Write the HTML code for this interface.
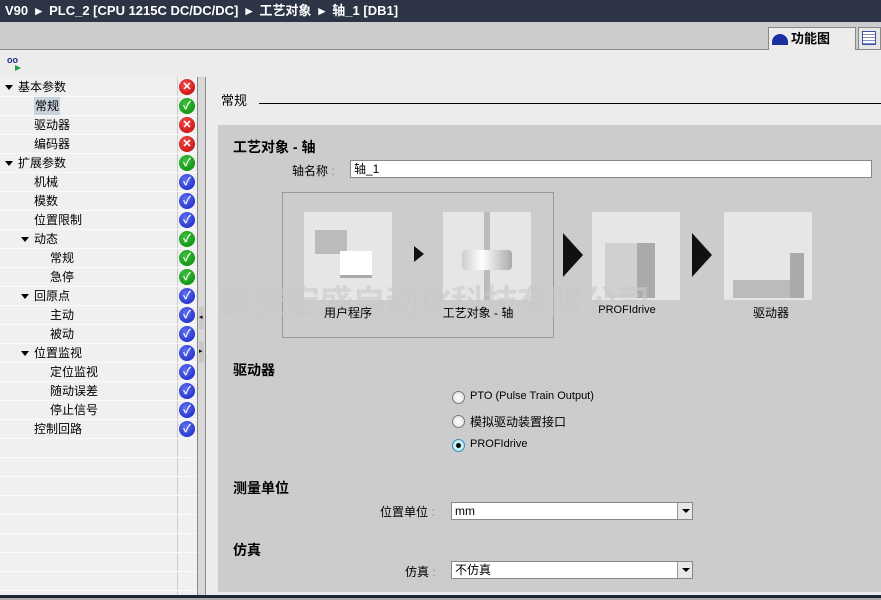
<!DOCTYPE html>
<html><head><meta charset="utf-8"><style>
*{margin:0;padding:0;box-sizing:border-box}
body{width:881px;height:600px;overflow:hidden;background:#ececec;font-family:"Liberation Sans","Noto Sans CJK SC",sans-serif;font-size:12px;color:#000;position:relative}
.a{position:absolute}
#title{left:0;top:0;width:881px;height:22px;background:#2c3446;color:#fff;font-weight:bold;font-size:13px;line-height:22px;padding-left:5px;white-space:nowrap}
#tb{left:0;top:22px;width:881px;height:28px;background:#cccccc;border-bottom:1px solid #888}
.row{position:absolute;left:0;width:197px;height:19px;border-bottom:1px solid #fafafa;line-height:18px;font-size:12px}
.ic{position:absolute;left:179px;top:1px;width:16px;height:16px;border-radius:50%;color:#fff;font-size:11px;font-weight:bold;line-height:16px;text-align:center}
.r{background:radial-gradient(circle at 40% 35%,#f05050,#c00000)}
.g{background:radial-gradient(circle at 40% 35%,#40c040,#008800)}
.b{background:radial-gradient(circle at 40% 35%,#6070f0,#1020c0)}
.tri{position:absolute;top:7px;width:0;height:0;border-left:4px solid transparent;border-right:4px solid transparent;border-top:5px solid #000}
.img{position:absolute;width:88px;height:88px;background:#e6e6e6}
.lbl{position:absolute;font-size:12px;text-align:center;width:120px}
.sel{position:absolute;background:#fff;border:1px solid #888;height:18px;line-height:16px;padding-left:3px}
.dd{position:absolute;right:0;top:0;width:15px;height:16px;background:#e8e8e8;border-left:1px solid #999}
.dd:after{content:"";position:absolute;left:4px;top:6px;border-left:4px solid transparent;border-right:4px solid transparent;border-top:4px solid #000}
.rad{position:absolute;left:452px;width:13px;height:13px;border-radius:50%;border:1px solid #777;background:radial-gradient(circle,#fff,#ddd)}
.h{position:absolute;font-weight:bold;font-size:14px}
</style></head><body>
<div id="title" class="a">V90 &nbsp;▸ &nbsp;PLC_2 [CPU 1215C DC/DC/DC] &nbsp;▸ &nbsp;工艺对象 &nbsp;▸ &nbsp;轴_1 [DB1]</div>
<div id="tb" class="a"></div>
<div class="a" style="left:768px;top:27px;width:88px;height:23px;background:#ececec;border:1px solid #888;border-bottom:none;font-weight:bold;font-size:13px;line-height:22px;padding-left:22px">功能图</div>
<div class="a" style="left:772px;top:34px;width:16px;height:11px;background:#1a2fa0;border-radius:8px 8px 0 0"></div>
<div class="a" style="left:858px;top:27px;width:23px;height:23px;background:#e6e6e6;border:1px solid #888"></div>
<div class="a" style="left:862px;top:31px;width:14px;height:14px;border:1px solid #4050a0;background:repeating-linear-gradient(#fff 0 2px,#8090c0 2px 3px)"></div>
<div class="a" style="left:7px;top:55px;font-size:9px;color:#1a3080;font-weight:bold">oo</div>
<div class="a" style="left:15px;top:65px;border-top:3px solid transparent;border-bottom:3px solid transparent;border-left:6px solid #20a040"></div>
<div class="a" style="left:0;top:77px;width:198px;height:518px;background:#f0f0f0"></div>
<div class="a" style="left:177px;top:77px;width:1px;height:518px;background:#ccc"></div>
<div class="a" style="left:197px;top:77px;width:9px;height:518px;background:#d8d8d8;border-left:1px solid #888;border-right:1px solid #888"></div>
<div class="a" style="left:199px;top:307px;width:5px;height:22px;background:#c8c8c8;font-size:7px;line-height:22px">◂</div>
<div class="a" style="left:199px;top:341px;width:5px;height:22px;background:#c8c8c8;font-size:7px;line-height:22px">▸</div>
<div id="rows"></div>
<div class="a" style="left:221px;top:90px;font-size:13px">常规</div>
<div class="a" style="left:259px;top:103px;width:622px;height:1px;background:#000"></div>
<div class="a" style="left:218px;top:125px;width:663px;height:467px;background:#cccccc"></div>
<div class="h" style="left:233px;top:137px">工艺对象 - 轴</div>
<div class="a" style="left:292px;top:162px">轴名称 <span style="color:#888">:</span></div>
<div class="sel" style="left:350px;top:160px;width:522px">轴_1</div>
<div class="a" style="left:282px;top:192px;width:272px;height:146px;border:1px solid #999"></div>
<div class="img" style="left:304px;top:212px"></div>
<div class="a" style="left:315px;top:230px;width:32px;height:24px;background:#bbb"></div>
<div class="a" style="left:340px;top:251px;width:32px;height:27px;background:#fff;border-bottom:3px solid #aaa"></div>
<div class="img" style="left:443px;top:212px"></div>
<div class="a" style="left:484px;top:212px;width:6px;height:88px;background:#bbb"></div>
<div class="a" style="left:462px;top:250px;width:50px;height:20px;background:linear-gradient(90deg,#ccc,#fff 40%,#aaa);border-radius:4px"></div>
<div class="img" style="left:592px;top:212px"></div>
<div class="a" style="left:605px;top:243px;width:50px;height:55px;background:#d0d0d0;border-right:18px solid #aaa"></div>
<div class="img" style="left:724px;top:212px"></div>
<div class="a" style="left:733px;top:280px;width:70px;height:18px;background:#bbb"></div>
<div class="a" style="left:790px;top:253px;width:14px;height:45px;background:#aaa"></div>
<div class="a" style="left:220px;top:275px;font-size:34px;font-weight:bold;color:rgba(200,200,200,0.6);letter-spacing:-1px;white-space:nowrap">泰安宏盛自动化科技有限公司</div>
<div class="a" style="left:414px;top:246px;border-top:8px solid transparent;border-bottom:8px solid transparent;border-left:10px solid #111"></div>
<div class="a" style="left:563px;top:233px;border-top:22px solid transparent;border-bottom:22px solid transparent;border-left:20px solid #111"></div>
<div class="a" style="left:692px;top:233px;border-top:22px solid transparent;border-bottom:22px solid transparent;border-left:20px solid #111"></div>
<div class="lbl" style="left:288px;top:304px">用户程序</div>
<div class="lbl" style="left:418px;top:304px">工艺对象 - 轴</div>
<div class="lbl" style="left:567px;top:304px;font-size:11px">PROFIdrive</div>
<div class="lbl" style="left:711px;top:304px">驱动器</div>
<div class="h" style="left:233px;top:360px">驱动器</div>
<div class="rad" style="top:391px"></div>
<div class="a" style="left:470px;top:390px;font-size:11px">PTO (Pulse Train Output)</div>
<div class="rad" style="top:415px"></div>
<div class="a" style="left:470px;top:413px">模拟驱动装置接口</div>
<div class="rad" style="top:439px;border-color:#3a8ac0;background:radial-gradient(circle,#000 0 2px,#dff 3px,#8cd)"></div>
<div class="a" style="left:470px;top:438px;font-size:11px">PROFIdrive</div>
<div class="h" style="left:233px;top:478px">测量单位</div>
<div class="a" style="left:380px;top:503px">位置单位 <span style="color:#888">:</span></div>
<div class="sel" style="left:451px;top:502px;width:242px">mm<div class="dd"></div></div>
<div class="h" style="left:233px;top:540px">仿真</div>
<div class="a" style="left:405px;top:563px">仿真 <span style="color:#888">:</span></div>
<div class="sel" style="left:451px;top:561px;width:242px">不仿真<div class="dd"></div></div>
<div class="a" style="left:0;top:595px;width:881px;height:3px;background:#1e2433"></div>
<div class="a" style="left:0;top:598px;width:881px;height:2px;background:#aaa"></div>
<script>
var items=[["基本参数",0,1,"r"],["常规",1,0,"g"],["驱动器",1,0,"r"],["编码器",1,0,"r"],["扩展参数",0,1,"g"],["机械",1,0,"b"],["模数",1,0,"b"],["位置限制",1,0,"b"],["动态",1,1,"g"],["常规",2,0,"g"],["急停",2,0,"g"],["回原点",1,1,"b"],["主动",2,0,"b"],["被动",2,0,"b"],["位置监视",1,1,"b"],["定位监视",2,0,"b"],["随动误差",2,0,"b"],["停止信号",2,0,"b"],["控制回路",1,0,"b"]];
var h="";for(var i=0;i<27;i++){var t=78+i*19;var it=items[i];h+='<div class="row" style="top:'+t+'px">';if(it){var x=[18,34,50][it[1]];if(it[2])h+='<div class="tri" style="left:'+(x-13)+'px"></div>';h+='<span style="position:absolute;left:'+x+'px;'+(i==1?'background:#c8d2dc;padding:0 1px;':'')+'">'+it[0]+'</span><div class="ic '+it[3]+'">'+(it[3]=="r"?"✕":"✓")+'</div>';}h+='</div>';}
document.getElementById("rows").outerHTML=h;
</script>
</body></html>
